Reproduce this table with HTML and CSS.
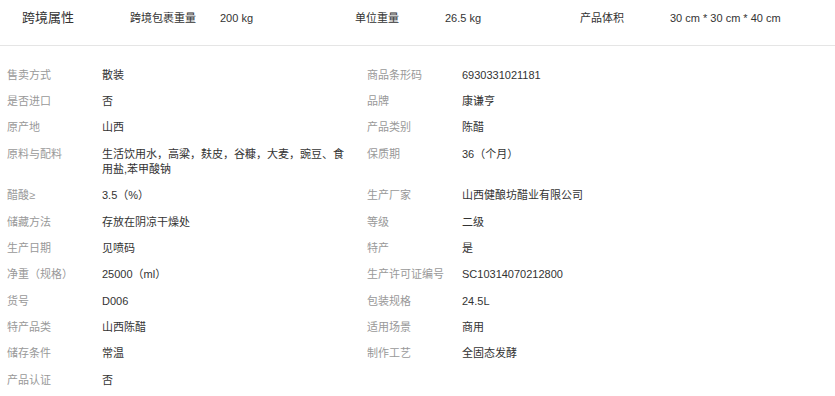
FILE: index.html
```html
<!DOCTYPE html>
<html lang="zh-CN">
<head>
<meta charset="utf-8">
<title>跨境属性</title>
<link rel="stylesheet" href="styles.css">
</head>
<body>
<div class="page">
  <div class="head">
    <div class="head-title">跨境属性</div>
    <div class="head-item"><span class="head-label">跨境包裹重量</span><span class="head-value">200 kg</span></div>
    <div class="head-item"><span class="head-label">单位重量</span><span class="head-value">26.5 kg</span></div>
    <div class="head-item"><span class="head-label">产品体积</span><span class="head-value">30 cm * 30 cm * 40 cm</span></div>
  </div>
  <div class="props">
    <div class="lab">售卖方式</div><div class="val">散装</div>
    <div class="lab">商品条形码</div><div class="val">6930331021181</div>

    <div class="lab">是否进口</div><div class="val">否</div>
    <div class="lab">品牌</div><div class="val">康谦亨</div>

    <div class="lab">原产地</div><div class="val">山西</div>
    <div class="lab">产品类别</div><div class="val">陈醋</div>

    <div class="lab">原料与配料</div><div class="val">生活饮用水，高粱，麸皮，谷糠，大麦，豌豆、食用盐,苯甲酸钠</div>
    <div class="lab">保质期</div><div class="val">36（个月）</div>

    <div class="lab">醋酸≥</div><div class="val">3.5（%）</div>
    <div class="lab">生产厂家</div><div class="val">山西健酿坊醋业有限公司</div>

    <div class="lab">储藏方法</div><div class="val">存放在阴凉干燥处</div>
    <div class="lab">等级</div><div class="val">二级</div>

    <div class="lab">生产日期</div><div class="val">见喷码</div>
    <div class="lab">特产</div><div class="val">是</div>

    <div class="lab">净重（规格）</div><div class="val">25000（ml）</div>
    <div class="lab">生产许可证编号</div><div class="val">SC10314070212800</div>

    <div class="lab">货号</div><div class="val">D006</div>
    <div class="lab">包装规格</div><div class="val">24.5L</div>

    <div class="lab">特产品类</div><div class="val">山西陈醋</div>
    <div class="lab">适用场景</div><div class="val">商用</div>

    <div class="lab">储存条件</div><div class="val">常温</div>
    <div class="lab">制作工艺</div><div class="val">全固态发酵</div>

    <div class="lab">产品认证</div><div class="val">否</div>
    <div class="lab"></div><div class="val"></div>
  </div>
</div>
</body>
</html>
```
FILE: styles.css
```css
html, body {
  margin: 0;
  padding: 0;
  background: #fff;
}
body {
  font-family: "Liberation Sans", "Noto Sans CJK SC", sans-serif;
  color: #333;
  font-size: 11px;
}
.page {
  width: 835px;
}
.head {
  display: flex;
  align-items: center;
  height: 46px;
  padding: 0 0 0 22px;
  box-sizing: border-box;
  padding-bottom: 10px;
  border-bottom: 1px solid #e5e5e5;
}
.head-title {
  width: 108px;
  font-size: 13px;
  line-height: 16px;
  color: #333;
}
.head-item {
  width: 225px;
  display: flex;
  line-height: 16px;
}
.head-label {
  width: 90px;
  color: #333;
}
.head-value {
  color: #333;
}
.props {
  display: grid;
  grid-template-columns: 95px 265px 95px 1fr;
  padding: 16px 0 0 7px;
}
.lab, .val {
  line-height: 15px;
  padding: 5.7px 0;
}
.lab {
  color: #999;
}
.val {
  color: #333;
  padding-right: 16px;
}
```
